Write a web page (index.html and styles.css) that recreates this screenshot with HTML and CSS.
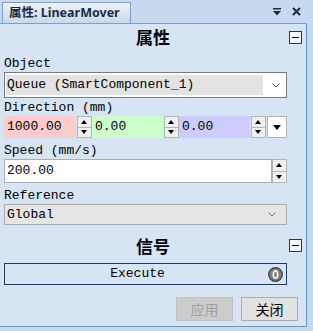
FILE: index.html
```html
<!DOCTYPE html>
<html lang="zh">
<head>
    <meta charset="UTF-8">
    <title>属性: LinearMover</title>
    <link rel="stylesheet" href="styles.css">
</head>
<body>
    <div class="window">
        <!-- tab strip -->
        <div class="tabbar">
            <div class="tab">属性: LinearMover</div>
            <div class="tab-tools">
                <svg class="tool-menu" width="8" height="8" viewBox="0 0 8 8">
                    <rect x="0" y="0" width="8" height="1.5" fill="#1b2b44"/>
                    <polygon points="0,3 8,3 4,7.5" fill="#1b2b44"/>
                </svg>
                <svg class="tool-close" width="9" height="9" viewBox="0 0 9 9">
                    <path d="M1 1 L8 8 M8 1 L1 8" stroke="#1b2b44" stroke-width="2"/>
                </svg>
            </div>
        </div>

        <div class="panel">
            <div class="section-head">
                <span></span>
                <h2>属性</h2>
                <span class="collapse"></span>
            </div>

            <label class="field-label label-object">Object</label>
            <div class="combo combo-active">
                <div class="combo-value">Queue (SmartComponent_1)</div>
                <div class="combo-arrow">
                    <svg width="8" height="5" viewBox="0 0 8 5"><polyline points="0.5,0.5 4,4 7.5,0.5" fill="none" stroke="#555" stroke-width="1"/></svg>
                </div>
            </div>

            <label class="field-label label-dir">Direction (mm)</label>
            <div class="vector-row">
                <div class="num num-x">1000.00</div>
                <div class="spin"><span class="up"></span><span class="down"></span></div>
                <div class="num num-y">0.00</div>
                <div class="spin"><span class="up"></span><span class="down"></span></div>
                <div class="num num-z">0.00</div>
                <div class="spin"><span class="up"></span><span class="down"></span></div>
                <div class="drop-btn"><span class="tri"></span></div>
            </div>

            <label class="field-label label-speed">Speed (mm/s)</label>
            <div class="speed-row">
                <div class="num num-plain">200.00</div>
                <div class="spin"><span class="up"></span><span class="down"></span></div>
            </div>

            <label class="field-label label-ref">Reference</label>
            <div class="combo combo-disabled">
                <div class="combo-value">Global</div>
                <div class="combo-arrow">
                    <svg width="8" height="5" viewBox="0 0 8 5"><polyline points="0.5,0.5 4,4 7.5,0.5" fill="none" stroke="#777" stroke-width="1"/></svg>
                </div>
            </div>

            <div class="section-head head-signal">
                <span></span>
                <h2>信号</h2>
                <span class="collapse"></span>
            </div>

            <div class="execute">
                <span>Execute</span>
                <svg class="indicator" width="15" height="15" viewBox="0 0 15 15">
                    <circle cx="7.5" cy="7.5" r="6.8" fill="#7d7d7d" stroke="#3a3a3a" stroke-width="1.2"/>
                    <ellipse cx="7.5" cy="7.5" rx="2.2" ry="3.6" fill="none" stroke="#fff" stroke-width="1.6"/>
                </svg>
            </div>

            <div class="button-row">
                <button class="btn" disabled>应用</button>
                <button class="btn">关闭</button>
            </div>
        </div>
    </div>
</body>
</html>
```

FILE: styles.css
```css
* {
    box-sizing: border-box;
    margin: 0;
    padding: 0;
}

body {
    width: 313px;
    height: 331px;
    overflow: hidden;
    background: #c6d9ef;
    font-family: "Liberation Mono", monospace;
    font-size: 13px;
    color: #000;
}

.window {
    width: 307px;
}

/* tab strip */
.tabbar {
    height: 23px;
    display: flex;
    align-items: flex-end;
    padding-left: 2px;
}

.tab {
    width: 129px;
    height: 21px;
    border: 1px solid #7f9fc8;
    border-bottom: none;
    background: linear-gradient(#edf2f9, #cbd8e8);
    font-family: "Noto Sans", "Noto Sans CJK SC", sans-serif;
    font-weight: bold;
    font-size: 12.5px;
    line-height: 19px;
    padding-left: 6px;
    color: #1b2b44;
    white-space: nowrap;
}

.tab-tools {
    margin-left: auto;
    align-self: stretch;
    display: flex;
    align-items: center;
    gap: 11px;
    padding-right: 6px;
}

/* panel */
.panel {
    height: 304px;
    background: #d6e4f4;
    border-top: 1px solid #7f9fc8;
    border-right: 1px solid #6593cc;
    border-bottom: 1px solid #6593cc;
    padding: 0 19px 0 4px;
    display: flex;
    flex-direction: column;
}

.section-head {
    height: 26px;
    display: grid;
    grid-template-columns: 1fr auto 1fr;
    align-items: center;
    margin-right: -15px;
}

.section-head h2 {
    font-family: "Noto Sans CJK SC", sans-serif;
    font-size: 17px;
    font-weight: bold;
    line-height: 20px;
    letter-spacing: 0;
    padding-top: 0;
}

.collapse {
    justify-self: end;
    width: 13px;
    height: 13px;
    border: 1px solid #1c3d63;
    background: #f4f8fc;
    position: relative;
}

.collapse::after {
    content: "";
    position: absolute;
    left: 2px;
    right: 2px;
    top: 5px;
    height: 1px;
    background: #000;
}

.field-label {
    display: block;
    line-height: 16px;
    height: 16px;
}

.label-object { margin-top: 6px; }
.label-dir { margin-top: 2px; }
.label-speed { margin-top: 5px; }
.label-ref { margin-top: 5px; }

/* combo boxes */
.combo {
    display: flex;
    height: 26px;
    border: 1px solid #7a7a7a;
    background: #fff;
}

.combo-value {
    flex: 1;
    line-height: 20px;
    padding-left: 1px;
    white-space: nowrap;
    overflow: hidden;
}

.combo-active .combo-value {
    margin: 2px 0 2px 1px;
    background: #e3e3e3;
}

.combo-arrow {
    width: 23px;
    display: flex;
    align-items: center;
    justify-content: center;
    padding-left: 2px;
}

.combo-disabled {
    height: 21px;
    border-color: #adadad;
    background: #e5e5e5;
}

.combo-disabled .combo-value {
    line-height: 19px;
    padding-left: 2px;
}

.combo-disabled .combo-arrow {
    width: 18px;
    padding-left: 0;
    justify-content: flex-start;
}

/* number fields */
.vector-row {
    display: grid;
    grid-template-columns: 72px 16px 71px 16px 71px 16px 21px;
    height: 22px;
}

.num {
    line-height: 22px;
    padding-left: 3px;
    white-space: nowrap;
}

.num-x { background: #ffcccc; }
.num-y { background: #ccffcc; }
.num-z { background: #ccccff; }

.spin {
    margin-left: 1px;
    display: flex;
    flex-direction: column;
    border: 1px solid #b4b4b4;
    background: #f0f0f0;
}

.spin span {
    flex: 1;
    position: relative;
}

.spin .up {
    border-bottom: 1px solid #b4b4b4;
}

.spin span::after {
    content: "";
    position: absolute;
    left: 50%;
    top: 50%;
    margin-left: -3.5px;
    border-left: 3.5px solid transparent;
    border-right: 3.5px solid transparent;
}

.spin .up::after {
    margin-top: -2px;
    border-bottom: 4px solid #000;
}

.spin .down::after {
    margin-top: -2px;
    border-top: 4px solid #000;
}

.drop-btn {
    margin-left: 1px;
    background: #fff;
    border: 1px solid #b4b4b4;
    display: flex;
    align-items: center;
    justify-content: center;
}

.drop-btn .tri {
    border-left: 4px solid transparent;
    border-right: 4px solid transparent;
    border-top: 5px solid #000;
}

.speed-row {
    display: grid;
    grid-template-columns: 268px 15px;
    height: 24px;
}

.speed-row .num-plain {
    background: #fff;
    border: 1px solid #adadad;
    line-height: 22px;
    padding-left: 2px;
}

.speed-row .spin {
    margin-left: 0;
}

.head-signal {
    margin-top: 8px;
    height: 25px;
}

/* execute signal */
.execute {
    margin-top: 5px;
    height: 22px;
    border: 1px solid #1c3d63;
    display: flex;
    align-items: center;
    justify-content: center;
    position: relative;
}

.execute span {
    line-height: 20px;
    margin-left: -16px;
}

.indicator {
    position: absolute;
    right: 3px;
    top: 3px;
}

.button-row {
    margin-top: 12px;
    margin-right: -11px;
    display: flex;
    justify-content: flex-end;
    gap: 8px;
}

.btn {
    width: 57px;
    height: 24px;
    border: 1px solid #adadad;
    background: #e1e1e1;
    font-family: "Noto Sans CJK SC", sans-serif;
    font-size: 14px;
    color: #000;
}

.btn:disabled {
    background: #cccccc;
    border-color: #bfbfbf;
    color: #a0a0a0;
}
```
